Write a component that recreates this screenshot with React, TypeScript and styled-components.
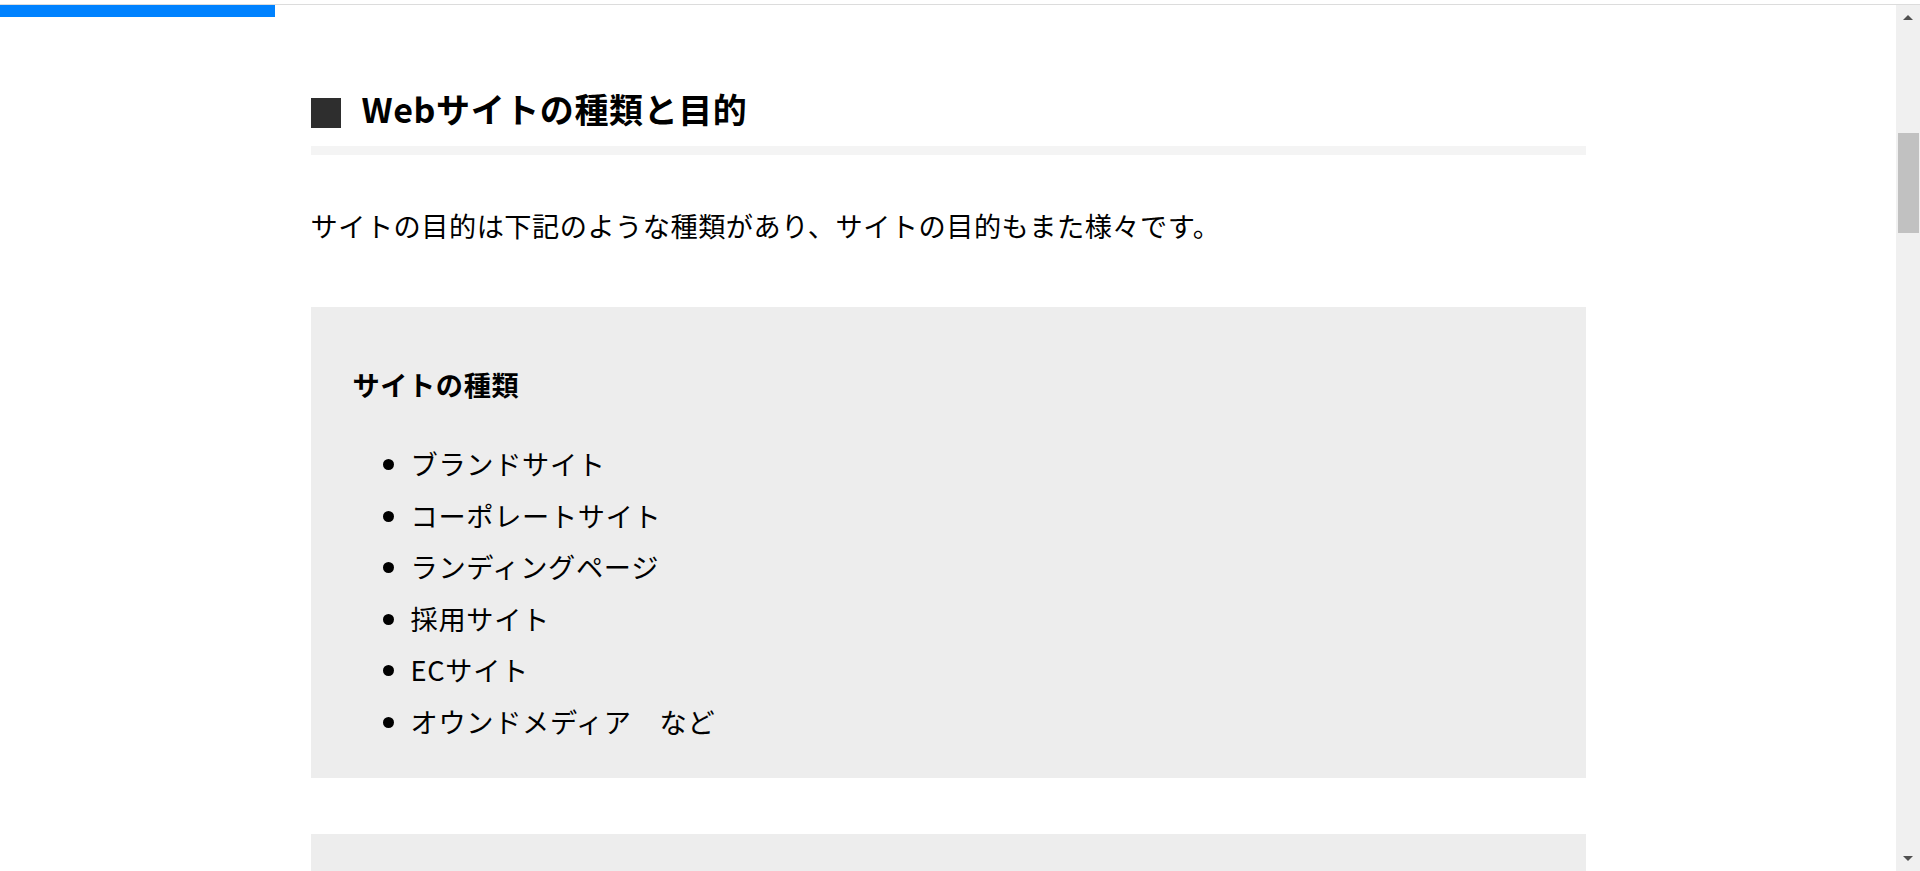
import * as React from "react";
import styled, { createGlobalStyle } from "styled-components";

// styled components
const GlobalStyle = createGlobalStyle`
html, body {
  margin: 0;
  height: 100%;
  overflow: hidden;
  background-color: #ffffff;
}
body {
  font-family: "Noto Sans CJK JP", "Noto Sans", sans-serif;
  color: #000000;
  letter-spacing: 0.6px;
}
`;

const Window = styled.div`
  height: 871px;
  display: flex;
  flex-direction: column;
`;

const TopEdge = styled.div`
  height: 4px;
  flex-shrink: 0;
  border-bottom: 1px solid #dcdcdc;
`;

const Frame = styled.div`
  flex: 1;
  display: flex;
  min-height: 0;
`;

const Main = styled.main`
  flex: 1;
  min-width: 0;
  overflow: hidden;
`;

const Progress = styled.div<{ $width: number }>`
  height: 12px;
  width: ${(p) => p.$width}px;
  background-color: #0082ff;
`;

const Article = styled.article`
  max-width: 1275px;
  margin: 0 auto;
  padding-top: 68px;
`;

const Heading = styled.h2`
  margin: 0;
  display: flex;
  align-items: center;
  gap: 21px;
  font-size: 34px;
  line-height: 48px;
  font-weight: 700;
  padding-bottom: 13px;
  border-bottom: 9px solid #f4f4f4;
`;

const Square = styled.span`
  width: 30px;
  height: 30px;
  margin-top: 8px;
  flex-shrink: 0;
  background-color: #2e2e2e;
`;

const Lead = styled.p`
  margin: 45px 0 0;
  font-size: 27.2px;
  line-height: 51px;
  letter-spacing: 0.5px;
`;

const Box = styled.section<{ $gap: number; $min?: number }>`
  margin-top: ${(p) => p.$gap}px;
  background-color: #ededed;
  padding: 52px 42px 31px;
  min-height: ${(p) => p.$min ?? 0}px;
`;

const BoxTitle = styled.h4`
  margin: 0;
  font-size: 27.2px;
  line-height: 51px;
  font-weight: 700;
`;

const List = styled.ul`
  margin: 28px 0 0;
  padding-left: 58px;
  font-size: 27.2px;
  line-height: 51.5px;
  letter-spacing: 0.7px;
`;

const Scrollbar = styled.aside`
  width: 24px;
  flex-shrink: 0;
  background-color: #f0f0f0;
  display: flex;
  flex-direction: column;
`;

const ArrowButton = styled.div<{ $down?: boolean }>`
  height: 25px;
  flex-shrink: 0;
  display: flex;
  align-items: center;
  justify-content: center;

  &::before {
    content: "";
    width: 0;
    height: 0;
    border-left: 5.5px solid transparent;
    border-right: 5.5px solid transparent;
    ${(p) =>
      p.$down
        ? "border-top: 5px solid #505050;"
        : "border-bottom: 5px solid #505050;"}
  }
`;

const Track = styled.div`
  flex: 1;
  display: flex;
  justify-content: center;
`;

const Thumb = styled.div`
  width: 21px;
  height: 100px;
  margin-top: 103px;
  background-color: #c1c1c1;
`;

const kinds = [
  "ブランドサイト",
  "コーポレートサイト",
  "ランディングページ",
  "採用サイト",
  "ECサイト",
  "オウンドメディア　など",
];

// components
const App = () => {
  return (
    <React.Fragment>
      <GlobalStyle />
      <Window>
        <TopEdge />
        <Frame>
          <Main>
            <Progress $width={275} />
            <Article>
              <Heading>
                <Square />
                Webサイトの種類と目的
              </Heading>
              <Lead>
                サイトの目的は下記のような種類があり、サイトの目的もまた様々です。
              </Lead>
              <Box $gap={56}>
                <BoxTitle>サイトの種類</BoxTitle>
                <List>
                  {kinds.map((k) => (
                    <li key={k}>{k}</li>
                  ))}
                </List>
              </Box>
              <Box $gap={56} $min={300} />
            </Article>
          </Main>
          <Scrollbar>
            <ArrowButton />
            <Track>
              <Thumb />
            </Track>
            <ArrowButton $down />
          </Scrollbar>
        </Frame>
      </Window>
    </React.Fragment>
  );
};

export default App;
